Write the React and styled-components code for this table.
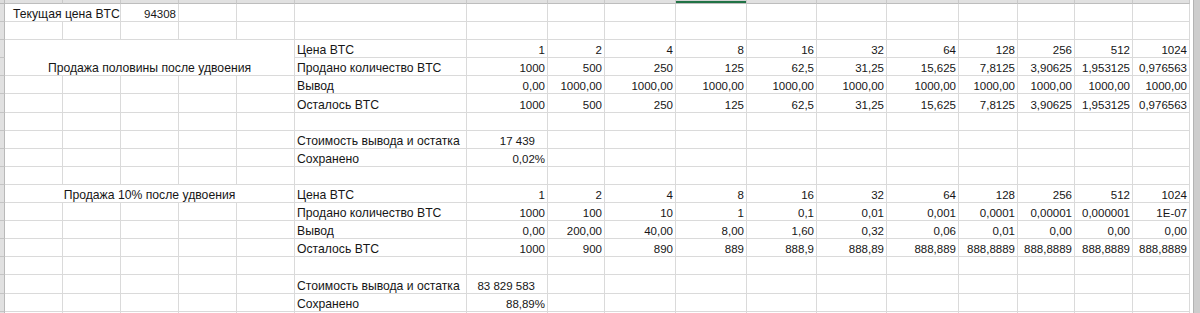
import React from "react";
import styled, { createGlobalStyle } from "styled-components";

// ширины колонок A..Q (с линией сетки справа)
const COLS = [58, 58, 58, 58, 58, 172, 81, 57, 71, 71, 70, 70, 72, 59, 57, 58, 57];
const SELECTED_COL = 9; // J

const PRICES = ["1", "2", "4", "8", "16", "32", "64", "128", "256", "512", "1024"];

const HALF = [
  {
    label: "Продано количество BTC",
    values: ["1000", "500", "250", "125", "62,5", "31,25", "15,625", "7,8125", "3,90625", "1,953125", "0,976563"],
  },
  {
    label: "Вывод",
    values: ["0,00", "1000,00", "1000,00", "1000,00", "1000,00", "1000,00", "1000,00", "1000,00", "1000,00", "1000,00", "1000,00"],
  },
  {
    label: "Осталось BTC",
    values: ["1000", "500", "250", "125", "62,5", "31,25", "15,625", "7,8125", "3,90625", "1,953125", "0,976563"],
  },
];

const TENTH = [
  {
    label: "Продано количество BTC",
    values: ["1000", "100", "10", "1", "0,1", "0,01", "0,001", "0,0001", "0,00001", "0,000001", "1E-07"],
  },
  {
    label: "Вывод",
    values: ["0,00", "200,00", "40,00", "8,00", "1,60", "0,32", "0,06", "0,01", "0,00", "0,00", "0,00"],
  },
  {
    label: "Осталось BTC",
    values: ["1000", "900", "890", "889", "888,9", "888,89", "888,889", "888,8889", "888,8889", "888,8889", "888,8889"],
  },
];

const GlobalStyle = createGlobalStyle`
  html, body {
    margin: 0;
    padding: 0;
    background: #ffffff;
    overflow: hidden;
  }
`;

export default function App() {
  // пустые ячейки от колонки start до колонки end
  const blanks = (start, end, key) =>
    COLS.slice(start, end).map((_, i) => <Cell key={`${key}-${i}`} />);

  const dataRow = (key, label, values, withA = true) => (
    <Row key={key}>
      <RowHead />
      {withA && blanks(0, 5, `${key}-a`)}
      <Cell>{label}</Cell>
      {values.map((v, i) => (
        <Cell key={i} $num>
          {v}
        </Cell>
      ))}
    </Row>
  );

  const summaryRow = (key, label, value, trail) => (
    <Row key={key}>
      <RowHead />
      {blanks(0, 5, `${key}-a`)}
      <Cell>{label}</Cell>
      <Cell $num $trail={trail}>
        {value}
      </Cell>
      {blanks(7, COLS.length, key)}
    </Row>
  );

  const emptyRow = (key) => (
    <Row key={key}>
      <RowHead />
      {blanks(0, COLS.length, key)}
    </Row>
  );

  return (
    <Window>
      <GlobalStyle />
      <Sheet>
        <colgroup>
          <col style={{ width: 5 }} />
          {COLS.map((w, i) => (
            <col key={i} style={{ width: w }} />
          ))}
        </colgroup>
        <tbody>
          <HeadRow>
            <Corner />
            {COLS.map((_, i) => (
              <ColHead key={i} $selected={i === SELECTED_COL} />
            ))}
          </HeadRow>

          <Row>
            <RowHead />
            <Cell colSpan={2} $indent>
              Текущая цена BTC
            </Cell>
            <Cell $num>94308</Cell>
            {blanks(3, COLS.length, "r1")}
          </Row>

          {emptyRow("r2")}

          <Row>
            <RowHead />
            <Cell colSpan={5} rowSpan={2} $center>
              Продажа половины после удвоения
            </Cell>
            <Cell>Цена BTC</Cell>
            {PRICES.map((p) => (
              <Cell key={p} $num>
                {p}
              </Cell>
            ))}
          </Row>
          {dataRow("r4", HALF[0].label, HALF[0].values, false)}
          {dataRow("r5", HALF[1].label, HALF[1].values)}
          {dataRow("r6", HALF[2].label, HALF[2].values)}

          {emptyRow("r7")}
          {summaryRow("r8", "Стоимость вывода и остатка", "17\u00a0439", true)}
          {summaryRow("r9", "Сохранено", "0,02%")}
          {emptyRow("r10")}

          <Row>
            <RowHead />
            <Cell colSpan={5} $center>
              Продажа 10% после удвоения
            </Cell>
            <Cell>Цена BTC</Cell>
            {PRICES.map((p) => (
              <Cell key={p} $num>
                {p}
              </Cell>
            ))}
          </Row>
          {dataRow("r12", TENTH[0].label, TENTH[0].values)}
          {dataRow("r13", TENTH[1].label, TENTH[1].values)}
          {dataRow("r14", TENTH[2].label, TENTH[2].values)}

          {emptyRow("r15")}
          {summaryRow("r16", "Стоимость вывода и остатка", "83\u00a0829\u00a0583", true)}
          {summaryRow("r17", "Сохранено", "88,89%")}
          {emptyRow("r18")}
        </tbody>
      </Sheet>
      <ScrollEdge />
    </Window>
  );
}

const Window = styled.div`
  display: flex;
  align-items: stretch;
  width: 1200px;
  height: 313px;
  overflow: hidden;
  background: #ffffff;
`;

const Sheet = styled.table`
  flex: none;
  width: 1190px;
  table-layout: fixed;
  border-collapse: separate;
  border-spacing: 0;
  font-family: "Liberation Sans", Arial, sans-serif;
  color: #161616;
`;

const HeadRow = styled.tr`
  height: 4px;
`;

const Row = styled.tr`
  height: 18.1px;
`;

const Corner = styled.td`
  box-sizing: border-box;
  padding: 0;
  height: 4px;
  background: #dcdcdc;
  border-right: 1px solid #b9b9b9;
  border-bottom: 1px solid #b9b9b9;
`;

const ColHead = styled.td`
  box-sizing: border-box;
  padding: 0;
  height: 4px;
  background: ${({ $selected }) => ($selected ? "#d2d2d2" : "#e1e1e1")};
  border-right: 1px solid #c9c9c9;
  border-bottom: 1px solid #bdbdbd;
  box-shadow: ${({ $selected }) => ($selected ? "inset 0 -2px 0 #217346" : "none")};
`;

const RowHead = styled.td`
  box-sizing: border-box;
  padding: 0;
  background: #e1e1e1;
  border-right: 1px solid #b9b9b9;
  border-bottom: 1px solid #c4c4c4;
`;

// текст в ячейках шире цифр, как у Calibri
const Cell = styled.td`
  box-sizing: border-box;
  padding: 0 ${({ $trail }) => ($trail ? "12px" : "2px")} 0
    ${({ $indent }) => ($indent ? "8px" : "2px")};
  border-right: 1px solid #dadada;
  border-bottom: 1px solid #dadada;
  font-size: ${({ $num }) => ($num ? "11.5px" : "12.2px")};
  line-height: 13px;
  text-align: ${({ $num, $center }) => ($num ? "right" : $center ? "center" : "left")};
  vertical-align: bottom;
  white-space: nowrap;
  overflow: hidden;
`;

const ScrollEdge = styled.div`
  flex: none;
  width: 6px;
  margin-left: 3px;
  background: #cdcdcd;
  border-left: 1px solid #b3b3b3;
`;
